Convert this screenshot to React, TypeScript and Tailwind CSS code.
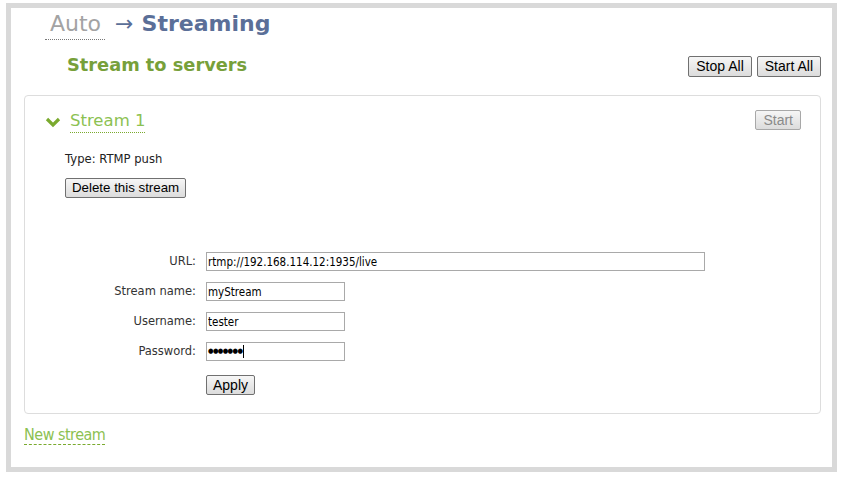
import { useState } from 'react';

const btnBase =
  "border border-[#707070] rounded-[2px] bg-gradient-to-b from-[#f6f6f6] to-[#dcdcdc] leading-[18px] text-black font-['Liberation_Sans',Arial,sans-serif]";

const label = "w-[181px] text-right pr-[10px] text-[11.5px] text-[#333] font-['DejaVu_Sans',Verdana,sans-serif]";
const input =
  "h-[19px] border border-[#a9a9a9] px-[1px] text-[11.5px] text-black font-['DejaVu_Sans_Condensed','DejaVu_Sans',sans-serif] outline-none";

export default function App() {
  const [url, setUrl] = useState('rtmp://192.168.114.12:1935/live');
  const [name, setName] = useState('myStream');
  const [user, setUser] = useState('tester');

  return (
    <div className="w-[844px] h-[477px] bg-white pt-[3px] pl-[6px]">
      <div className="w-[831px] h-[469px] border-[5px] border-[#d9d9d9] bg-white font-['DejaVu_Sans',Verdana,sans-serif]">
        {/* Title */}
        <div className="pl-[39px] pt-[3px] h-[34px] flex items-start text-[22px] leading-[26px]">
          <span className="text-[#a3a3a3] border-b border-dotted border-[#777] pb-[2px] -ml-[5px] pl-[5px] pr-[4px]">Auto</span>
          <span className="text-[#5b6f98] ml-[10px] mr-[8px]">→</span>
          <span className="text-[#5b6f98] font-bold">Streaming</span>
        </div>

        {/* Section header */}
        <div className="flex items-center justify-between pl-[56px] pr-[11px] mt-[13px] h-[24px]">
          <span className="text-[#77a03a] font-bold text-[17.8px] leading-[22px] -mt-[4px]">Stream to servers</span>
          <div className="flex gap-[5px] -mt-[2px]">
            <button className={`${btnBase} h-[21px] px-[7px] text-[14px]`}>Stop All</button>
            <button className={`${btnBase} h-[21px] px-[7px] text-[14px]`}>Start All</button>
          </div>
        </div>

        {/* Stream card */}
        <div className="ml-[13px] mr-[11px] mt-[16px] h-[319px] border border-[#dddddd] rounded-[4px]">
          <div className="flex items-start justify-between pl-[20px] pr-[19px] pt-[14px]">
            <div className="flex items-center">
              <svg width="16" height="12" viewBox="0 0 16 12" className="mt-[1px]">
                <path d="M2 3 L8 9 L14 3" fill="none" stroke="#7aaa2e" strokeWidth="3.2" />
              </svg>
              <span className="ml-[9px] text-[16.5px] leading-[22px] text-[#8cc152] border-b border-dotted border-[#7aaa2e]">
                Stream 1
              </span>
            </div>
            <button className="h-[20px] px-[7px] border border-[#a8a8a8] rounded-[2px] bg-gradient-to-b from-[#f6f6f6] to-[#dcdcdc] text-[14px] leading-[18px] text-[#8a8a8a] font-['Liberation_Sans',Arial,sans-serif]">
              Start
            </button>
          </div>

          <div className="pl-[40px] mt-[20px] text-[11.6px] leading-[13px] text-[#222]">Type: RTMP push</div>
          <div className="pl-[40px] mt-[9px]">
            <button className={`${btnBase} h-[20px] px-[6px] text-[13.3px]`}>Delete this stream</button>
          </div>

          <div className="mt-[53px] flex flex-col gap-[11px]">
            <div className="flex items-center">
              <span className={label}>URL:</span>
              <input className={`${input} w-[499px]`} value={url} onChange={(e) => setUrl(e.target.value)} />
            </div>
            <div className="flex items-center">
              <span className={label}>Stream name:</span>
              <input className={`${input} w-[139px]`} value={name} onChange={(e) => setName(e.target.value)} />
            </div>
            <div className="flex items-center">
              <span className={label}>Username:</span>
              <input className={`${input} w-[139px]`} value={user} onChange={(e) => setUser(e.target.value)} />
            </div>
            <div className="flex items-center">
              <span className={label}>Password:</span>
              <div className={`${input} w-[139px] border-[#7da2ce] flex items-center`}>
                <span className="text-[7px] tracking-[-0.6px] leading-none">●●●●●●●</span>
                <span className="ml-[1px] w-[1px] h-[13px] bg-black"></span>
              </div>
            </div>
            <div className="flex pl-[181px] mt-[3px]">
              <button className={`${btnBase} h-[20px] px-[6px] text-[14px]`}>Apply</button>
            </div>
          </div>
        </div>

        {/* New stream link */}
        <div className="ml-[13px] mt-[9px]">
          <span className="text-[16px] leading-[19px] text-[#8cc152] border-b border-dashed border-[#7aaa2e] font-['DejaVu_Sans_Condensed','DejaVu_Sans',sans-serif] tracking-[-0.5px]">
            New stream
          </span>
        </div>
      </div>
    </div>
  );
}
